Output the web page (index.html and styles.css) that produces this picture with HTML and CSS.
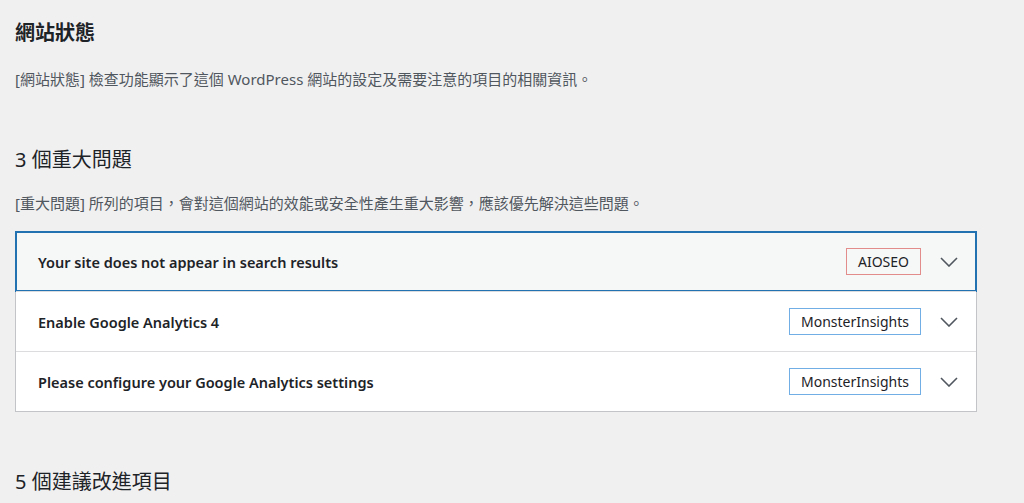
FILE: index.html
```html
<!DOCTYPE html>
<html lang="zh-TW">
<head>
    <meta charset="UTF-8">
    <title>網站狀態</title>
    <link rel="stylesheet" href="styles.css">
</head>
<body>
    <div class="wrap">
        <h1 class="page-title">網站狀態</h1>
        <p class="desc">[網站狀態] 檢查功能顯示了這個 WordPress 網站的設定及需要注意的項目的相關資訊。</p>

        <h2 class="group-title">3 個重大問題</h2>
        <p class="desc">[重大問題] 所列的項目，會對這個網站的效能或安全性產生重大影響，應該優先解決這些問題。</p>

        <div class="accordion">
            <div class="row focused">
                <span class="row-title">Your site does not appear in search results</span>
                <span class="badge red">AIOSEO</span>
                <span class="toggle">
                    <svg width="18" height="10" viewBox="0 0 18 10"><path d="M1 1l8 8 8-8" fill="none" stroke="#50575e" stroke-width="1.6"/></svg>
                </span>
            </div>
            <div class="row">
                <span class="row-title">Enable Google Analytics 4</span>
                <span class="badge blue">MonsterInsights</span>
                <span class="toggle">
                    <svg width="18" height="10" viewBox="0 0 18 10"><path d="M1 1l8 8 8-8" fill="none" stroke="#50575e" stroke-width="1.6"/></svg>
                </span>
            </div>
            <div class="row">
                <span class="row-title">Please configure your Google Analytics settings</span>
                <span class="badge blue">MonsterInsights</span>
                <span class="toggle">
                    <svg width="18" height="10" viewBox="0 0 18 10"><path d="M1 1l8 8 8-8" fill="none" stroke="#50575e" stroke-width="1.6"/></svg>
                </span>
            </div>
        </div>

        <h2 class="group-title second">5 個建議改進項目</h2>
    </div>
</body>
</html>
```

FILE: styles.css
```css
body {
    margin: 0;
    background: #f0f0f1;
    color: #1d2327;
    font-family: "Noto Sans", "Noto Sans CJK TC", sans-serif;
    font-size: 14px;
}
.wrap {
    width: 962px;
    padding: 0 15px;
}
.page-title {
    font-size: 20px;
    font-weight: 600;
    line-height: 28px;
    margin: 19px 0 0;
}
.desc {
    color: #50575e;
    font-size: 15px;
    line-height: 20px;
    margin: 0;
}
.page-title + .desc {
    margin-top: 22px;
}
.group-title {
    font-size: 20px;
    font-weight: 400;
    line-height: 28px;
    margin: 57px 0 0;
}
.group-title + .desc {
    margin-top: 19px;
}
.accordion {
    margin-top: 18px;
    background: #fff;
    border: 1px solid #c3c4c7;
}
.row {
    display: flex;
    align-items: center;
    height: 59px;
    padding: 0 0 0 22px;
    border-top: 1px solid #dcdcde;
}
.row:first-child {
    border-top: none;
}
.row.focused {
    background: #f6f7f7;
    box-shadow: inset 0 0 0 2px #2271b1;
    margin: -1px;
    height: 61px;
    padding-left: 23px;
}
.row-title {
    flex: 1;
    font-size: 14.5px;
    font-weight: 600;
}
.badge {
    height: 25px;
    line-height: 25px;
    padding: 0 11px;
    border: 1px solid #72aee6;
    color: #1d2327;
}
.badge.red {
    border-color: #e28c8c;
}
.toggle {
    width: 55px;
    display: flex;
    justify-content: center;
}
.focused .toggle {
    width: 56px;
}
.toggle svg {
    display: block;
}
.second {
    margin-top: 56px;
}
```
